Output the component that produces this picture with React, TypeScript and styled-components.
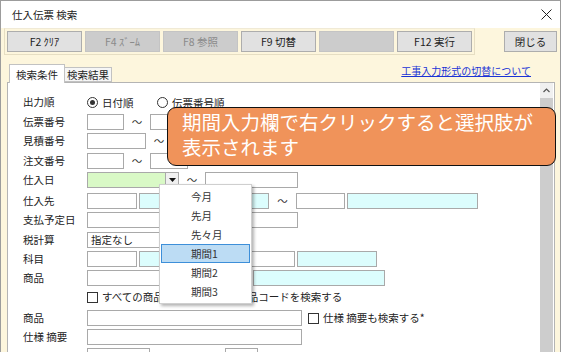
import * as React from 'react';
import styled, { createGlobalStyle } from 'styled-components';

const GlobalStyle = createGlobalStyle`
    html, body {
        margin: 0;
        padding: 0;
        background: #ffffff;
    }
    body {
        font-family: "Noto Sans CJK JP", "Noto Sans", sans-serif;
    }
`;

const toolButtons = [
    { label: 'F2 ｸﾘｱ', enabled: true },
    { label: 'F4 ｽﾞｰﾑ', enabled: false },
    { label: 'F8 参照', enabled: false },
    { label: 'F9 切替', enabled: true },
    { label: '', enabled: false },
    { label: 'F12 実行', enabled: true }
];

const menuItems = ['今月', '先月', '先々月', '期間1', '期間2', '期間3'];

const App = () => (
    <>
        <GlobalStyle />
        <Window>
            <TitleBar>
                <span>仕入伝票 検索</span>
                <svg width="11" height="11" viewBox="0 0 11 11">
                    <path d="M0.5 0.5 L10.5 10.5 M10.5 0.5 L0.5 10.5" stroke="#222" strokeWidth="1" />
                </svg>
            </TitleBar>

            <ToolbarRow>
                <ToolFrame>
                    {toolButtons.map((b, i) => (
                        <ToolButton key={i} $enabled={b.enabled}>{b.label}</ToolButton>
                    ))}
                </ToolFrame>
                <CloseButton>閉じる</CloseButton>
            </ToolbarRow>

            <TabRow>
                <Tab $active>検索条件</Tab>
                <Tab>検索結果</Tab>
                <HelpLink>工事入力形式の切替について</HelpLink>
            </TabRow>

            <Panel>
                <Form>
                    <Row $h={20}>
                        <Label>出力順</Label>
                        <RadioOption $w={70}><Radio $checked />日付順</RadioOption>
                        <RadioOption><Radio />伝票番号順</RadioOption>
                    </Row>
                    <Row $h={19}>
                        <Label>伝票番号</Label>
                        <Field $w={37} />
                        <Tilde $w={26}>～</Tilde>
                        <Field $w={38} />
                    </Row>
                    <Row $h={20}>
                        <Label>見積番号</Label>
                        <Field $w={59} />
                        <Tilde $w={26}>～</Tilde>
                        <Field $w={59} />
                    </Row>
                    <Row $h={19}>
                        <Label>注文番号</Label>
                        <Field $w={37} />
                        <Tilde $w={26}>～</Tilde>
                        <Field $w={38} />
                    </Row>
                    <Row $h={21}>
                        <Label>仕入日</Label>
                        <Field $w={79} $bg="#d9f9c6" />
                        <DropButton>
                            <svg width="7" height="4" viewBox="0 0 7 4">
                                <path d="M0 0 L7 0 L3.5 4 Z" fill="#111" />
                            </svg>
                        </DropButton>
                        <Tilde $w={26}>～</Tilde>
                        <Field $w={93} />
                    </Row>
                    <Row $h={19}>
                        <Label>仕入先</Label>
                        <Field $w={50} />
                        <Field $w={130} $ml={2} $bg="#dcfdfd" />
                        <Tilde $w={27}>～</Tilde>
                        <Field $w={49} />
                        <Field $w={131} $ml={2} $bg="#dcfdfd" />
                    </Row>
                    <Row $h={20}>
                        <Label>支払予定日</Label>
                        <Field $w={211} />
                    </Row>
                    <Row $h={19}>
                        <Label>税計算</Label>
                        <Field $w={140}>指定なし</Field>
                    </Row>
                    <Row $h={19}>
                        <Label>科目</Label>
                        <Field $w={50} />
                        <Field $w={106} $ml={2} $bg="#dcfdfd" />
                        <Field $w={48} $ml={2} />
                        <Field $w={80} $ml={2} $bg="#dcfdfd" />
                    </Row>
                    <Row $h={19}>
                        <Label>商品</Label>
                        <Field $w={164} />
                        <Field $w={132} $ml={2} $bg="#dcfdfd" />
                    </Row>
                    <Row $h={21}>
                        <Label />
                        <Check />
                        <CheckText>すべての商品マスタの中から商品コードを検索する</CheckText>
                    </Row>
                    <Row $h={19}>
                        <Label>商品</Label>
                        <Field $w={215} />
                        <Check $ml={6} />
                        <CheckText>仕様 摘要も検索する*</CheckText>
                    </Row>
                    <Row $h={19}>
                        <Label>仕様 摘要</Label>
                        <Field $w={215} />
                    </Row>
                    <Row $h={20}>
                        <Label />
                        <Field $w={63} />
                        <Field $w={33} $ml={75} />
                    </Row>
                </Form>
                <ScrollBar>
                    <ScrollArrow>
                        <svg width="7" height="5" viewBox="0 0 7 5">
                            <path d="M0.5 4 L3.5 1 L6.5 4" stroke="#555" strokeWidth="1.2" fill="none" />
                        </svg>
                    </ScrollArrow>
                    <ScrollThumb />
                </ScrollBar>
            </Panel>

            <Callout>
                期間入力欄で右クリックすると選択肢が<br />
                表示されます
            </Callout>

            <ContextMenu>
                {menuItems.map(item => (
                    <MenuItem key={item} $active={item === '期間1'}>{item}</MenuItem>
                ))}
            </ContextMenu>
        </Window>
    </>
);

const Window = styled.div`
    position: relative;
    width: 561px;
    height: 352px;
    overflow: hidden;
    box-sizing: border-box;
    border: 1px solid #9c9c9c;
    border-bottom: none;
    background: #fdf6dd;
    display: flex;
    flex-direction: column;
    font-size: 10.5px;
    color: #1e1e1e;
`;

const TitleBar = styled.div`
    height: 27px;
    flex: none;
    background: #ffffff;
    display: flex;
    align-items: center;
    justify-content: space-between;
    padding: 0 8px 0 11px;
    font-size: 10.5px;
    color: #222;
`;

const ToolbarRow = styled.div`
    height: 28px;
    flex: none;
    display: flex;
    justify-content: space-between;
    align-items: flex-start;
    padding: 0 3px;
`;

const ToolFrame = styled.div`
    display: flex;
    gap: 3px;
    padding: 2px;
    border: 1px solid #e6dec3;
    border-top-color: #f0ead6;
    background: #fdf6dd;
`;

const ToolButton = styled.div<{ $enabled?: boolean }>`
    width: 75px;
    height: 21px;
    box-sizing: border-box;
    display: flex;
    align-items: center;
    justify-content: center;
    font-size: 10.5px;
    background: ${p => (p.$enabled ? '#e1e1e1' : '#cccccc')};
    border: 1px solid ${p => (p.$enabled ? '#adadad' : '#c4c4c4')};
    color: ${p => (p.$enabled ? '#1e1e1e' : '#8a8a8a')};
`;

const CloseButton = styled(ToolButton).attrs({ $enabled: true })`
    width: 53px;
    margin-top: 3px;
`;

const TabRow = styled.div`
    height: 26px;
    flex: none;
    display: flex;
    align-items: flex-end;
    padding-left: 8px;
`;

const Tab = styled.div<{ $active?: boolean }>`
    position: relative;
    z-index: 1;
    box-sizing: border-box;
    width: ${p => (p.$active ? '56px' : '47px')};
    height: ${p => (p.$active ? '19px' : '15px')};
    margin-bottom: ${p => (p.$active ? '-1px' : '0')};
    display: flex;
    align-items: center;
    justify-content: center;
    background: ${p => (p.$active ? '#ffffff' : '#f6f6f6')};
    border: 1px solid #c2c2c2;
    border-bottom: ${p => (p.$active ? 'none' : '1px solid #c2c2c2')};
    border-left: ${p => (p.$active ? '1px solid #c2c2c2' : 'none')};
    font-size: 10.5px;
`;

const HelpLink = styled.a`
    align-self: flex-start;
    margin: 8px 29px 0 auto;
    line-height: 14px;
    font-size: 10px;
    color: #1a33d6;
    text-decoration: underline;
`;

const Panel = styled.div`
    flex: 1;
    margin-left: 6px;
    width: 548px;
    box-sizing: border-box;
    background: #ffffff;
    border: 1px solid #b4b4b4;
    border-bottom: none;
    display: flex;
    min-height: 0;
`;

const Form = styled.div`
    flex: 1;
    padding: 9px 0 0 15px;
`;

const Row = styled.div<{ $h: number }>`
    height: ${p => p.$h}px;
    display: flex;
    align-items: flex-start;
    padding-top: 2px;
    box-sizing: border-box;
`;

const Label = styled.div`
    width: 64px;
    flex: none;
    line-height: 16px;
    color: #222;
`;

const Field = styled.div<{ $w: number; $ml?: number; $bg?: string }>`
    width: ${p => p.$w}px;
    height: 16px;
    flex: none;
    box-sizing: border-box;
    margin-left: ${p => p.$ml || 0}px;
    border: 1px solid #a9a9a9;
    background: ${p => p.$bg || '#ffffff'};
    padding-left: 3px;
    line-height: 14px;
    color: #222;
`;

const Tilde = styled.div<{ $w: number }>`
    width: ${p => p.$w}px;
    flex: none;
    text-align: center;
    line-height: 16px;
    color: #333;
`;

const DropButton = styled.div`
    width: 13px;
    height: 16px;
    box-sizing: border-box;
    border: 1px solid #a9a9a9;
    border-left: none;
    background: #f0f0f0;
    display: flex;
    align-items: center;
    justify-content: center;
`;

const RadioOption = styled.div<{ $w?: number }>`
    display: flex;
    align-items: center;
    gap: 4px;
    height: 16px;
    width: ${p => (p.$w ? `${p.$w}px` : 'auto')};
    color: #222;
`;

const Radio = styled.span<{ $checked?: boolean }>`
    width: 11px;
    height: 11px;
    box-sizing: border-box;
    border-radius: 50%;
    border: 1px solid #333;
    background: #fff;
    display: inline-flex;
    align-items: center;
    justify-content: center;

    &::after {
        content: '';
        width: 5px;
        height: 5px;
        border-radius: 50%;
        background: ${p => (p.$checked ? '#333' : 'transparent')};
    }
`;

const Check = styled.span<{ $ml?: number }>`
    width: 11px;
    height: 11px;
    margin: 3px 0 0 ${p => p.$ml || 0}px;
    box-sizing: border-box;
    border: 1px solid #333;
    background: #fff;
    flex: none;
`;

const CheckText = styled.span`
    margin-left: 4px;
    line-height: 16px;
    color: #222;
    white-space: nowrap;
`;

const ScrollBar = styled.div`
    width: 13px;
    margin-right: 1px;
    display: flex;
    flex-direction: column;
`;

const ScrollArrow = styled.div`
    height: 15px;
    display: flex;
    align-items: center;
    justify-content: center;
    background: #f0f0f0;
`;

const ScrollThumb = styled.div`
    flex: 1;
    background: #cdcdcd;
`;

const Callout = styled.div`
    position: absolute;
    left: 166px;
    top: 106px;
    width: 389px;
    height: 59px;
    box-sizing: border-box;
    padding: 1px 0 0 14px;
    border: 1px solid #111;
    border-radius: 9px;
    background: #f0935a;
    color: #ffffff;
    font-size: 19.5px;
    line-height: 25px;
    white-space: nowrap;
    z-index: 5;
`;

const ContextMenu = styled.div`
    position: absolute;
    left: 158px;
    top: 183px;
    width: 93px;
    box-sizing: border-box;
    padding: 2px 1px;
    background: #ffffff;
    border: 1px solid #cfcfcf;
    box-shadow: 2px 2px 3px rgba(0, 0, 0, 0.3);
    z-index: 4;
`;

const MenuItem = styled.div<{ $active?: boolean }>`
    position: relative;
    height: 19px;
    box-sizing: border-box;
    padding-left: 29px;
    line-height: 17px;
    font-size: 10.5px;
    color: #333;
    background: ${p => (p.$active ? '#bcdcf4' : 'transparent')};
    border: 1px solid ${p => (p.$active ? '#3d8fd9' : 'transparent')};
`;

export default App;
